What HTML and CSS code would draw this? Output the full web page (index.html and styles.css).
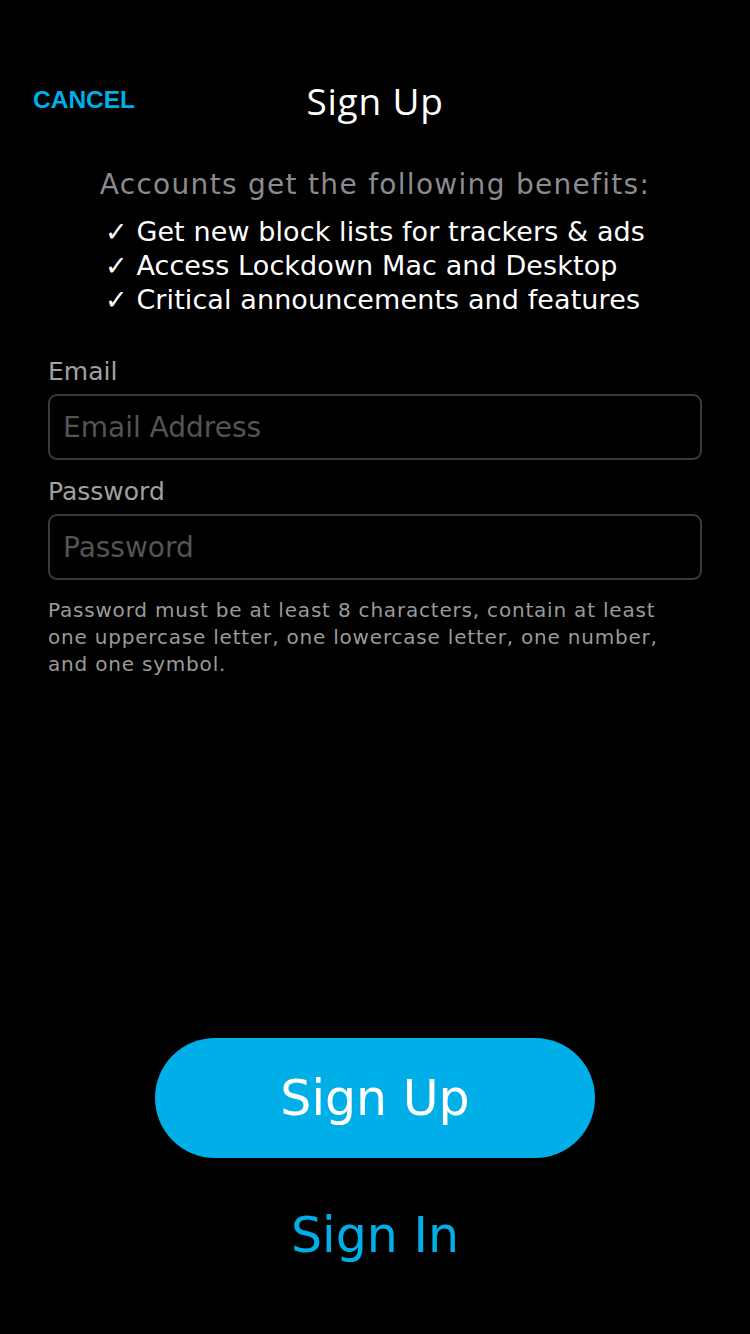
FILE: index.html
```html
<!DOCTYPE html>
<html lang="en">
<head>
<meta charset="utf-8">
<title>Sign Up</title>
<link rel="stylesheet" href="styles.css">
</head>
<body>
<div class="screen">
  <header class="nav">
    <a class="cancel">CANCEL</a>
    <h1 class="title">Sign Up</h1>
    <span></span>
  </header>

  <section class="benefits">
    <p class="benefits-head">Accounts get the following benefits:</p>
    <ul class="benefit-list">
      <li><span class="check">✓</span> Get new block lists for trackers &amp; ads</li>
      <li><span class="check">✓</span> Access Lockdown Mac and Desktop</li>
      <li><span class="check">✓</span> Critical announcements and features</li>
    </ul>
  </section>

  <form class="form">
    <label class="label">Email</label>
    <div class="field"><span class="placeholder">Email Address</span></div>
    <label class="label">Password</label>
    <div class="field"><span class="placeholder">Password</span></div>
    <p class="hint">Password must be at least 8 characters, contain at least one uppercase letter, one lowercase letter, one number, and one symbol.</p>
  </form>

  <div class="spacer"></div>

  <div class="actions">
    <button class="primary">Sign Up</button>
    <a class="secondary">Sign In</a>
  </div>
</div>
</body>
</html>
```
FILE: styles.css
```css
* { box-sizing: border-box; }
html, body { margin: 0; padding: 0; background: #000; }
body { font-family: "DejaVu Sans", sans-serif; color: #fff; }

.screen {
  width: 750px;
  min-height: 1334px;
  display: flex;
  flex-direction: column;
}

.nav {
  display: grid;
  grid-template-columns: 1fr auto 1fr;
  align-items: center;
  height: 80px;
  margin-top: 60px;
}
.cancel {
  padding-left: 33px;
  font-family: "Liberation Sans", sans-serif;
  font-weight: 700;
  font-size: 24.5px;
  color: #00aee8;
}
.title {
  margin: 0;
  font-family: "Open Sans", sans-serif;
  font-weight: 400;
  font-size: 37px;
  letter-spacing: 0.8px;
  color: #fff;
}

.benefits {
  margin-top: 26px;
  display: flex;
  flex-direction: column;
  align-items: center;
}
.benefits-head {
  margin: 0;
  font-size: 28px;
  letter-spacing: 1.3px;
  line-height: 38px;
  color: #8b8b8f;
}
.benefit-list {
  list-style: none;
  margin: 11px 0 0;
  padding: 0;
  text-align: left;
  font-size: 27px;
  letter-spacing: 0.1px;
  line-height: 34px;
  color: #fff;
}
.check { font-weight: 700; }

.form {
  display: flex;
  flex-direction: column;
  padding: 0 48px;
  margin-top: 40px;
}
.label {
  font-size: 25px;
  line-height: 30px;
  color: #a0a0a0;
}
.field {
  height: 66px;
  border: 2px solid #3a3a3c;
  border-radius: 9px;
  margin: 7px 0 17px;
  display: flex;
  align-items: center;
  padding-left: 13px;
}
.placeholder {
  font-size: 28px;
  color: #545456;
}
.hint {
  margin: 0;
  max-width: 632px;
  font-size: 20px;
  letter-spacing: 0.8px;
  line-height: 27px;
  color: #9a9a9a;
}

.spacer { flex: 1; }

.actions {
  display: flex;
  flex-direction: column;
  align-items: center;
  padding-bottom: 68px;
}
.primary {
  width: 440px;
  height: 120px;
  border: 0;
  border-radius: 60px;
  background: #00aee8;
  color: #fff;
  font-family: "DejaVu Sans", sans-serif;
  font-size: 49px;
}
.secondary {
  margin-top: 48px;
  font-size: 49px;
  line-height: 60px;
  color: #00aee8;
}
```
